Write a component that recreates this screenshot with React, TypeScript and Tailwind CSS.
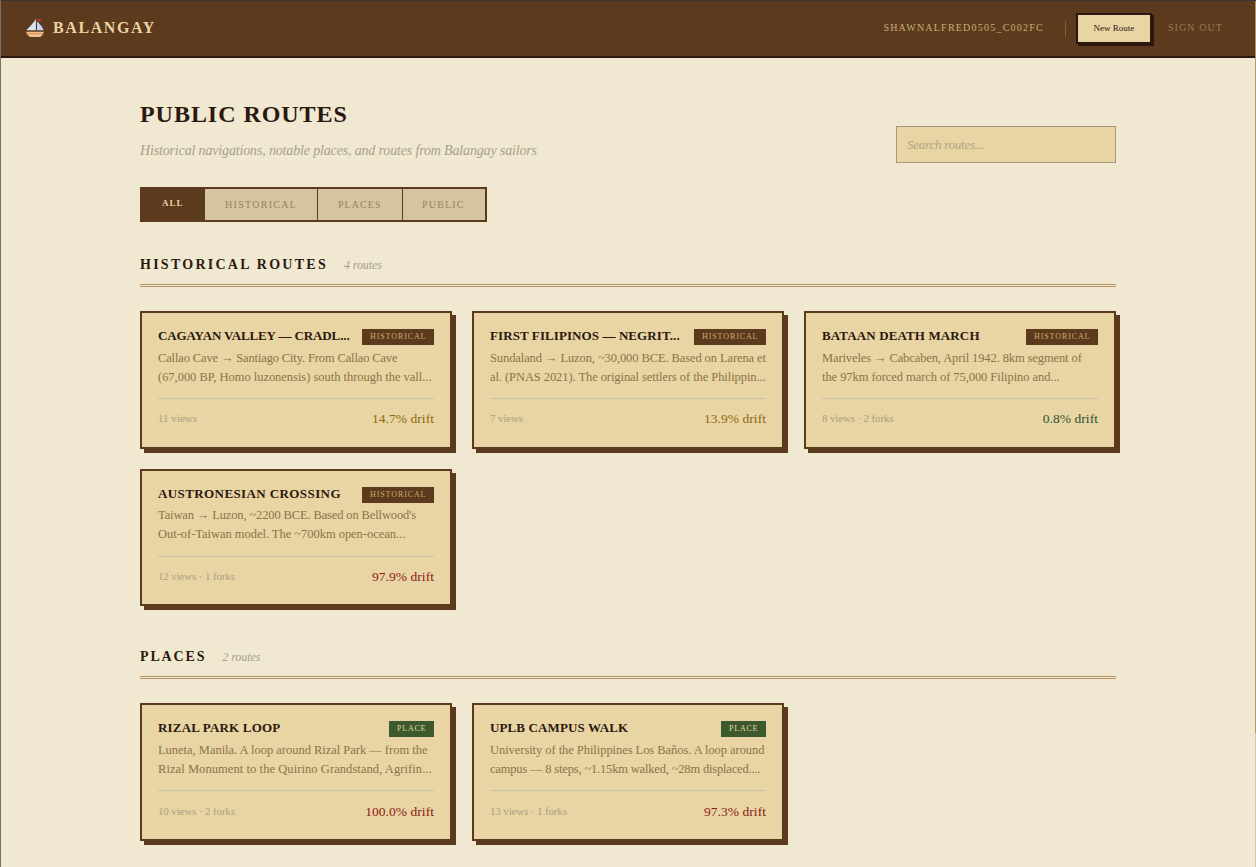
import React, { useState } from 'react';
import clsx from 'clsx';

type Kind = 'historical' | 'place';

interface Line {
  text: string;
  tracking: string;
}

interface RouteItem {
  title: Line;
  kind: Kind;
  description: Line[];
  stats: Line;
  drift: number;
}

const historicalRoutes: RouteItem[] = [
  {
    title: { text: 'CAGAYAN VALLEY — CRADL...', tracking: 'tracking-[-0.12px]' },
    kind: 'historical',
    description: [
      { text: 'Callao Cave → Santiago City. From Callao Cave', tracking: 'tracking-[-0.14px]' },
      { text: '(67,000 BP, Homo luzonensis) south through the vall...', tracking: 'tracking-[-0.028px]' },
    ],
    stats: { text: '11 views', tracking: 'tracking-normal' },
    drift: 14.7,
  },
  {
    title: { text: 'FIRST FILIPINOS — NEGRIT...', tracking: 'tracking-[0.09px]' },
    kind: 'historical',
    description: [
      { text: 'Sundaland → Luzon, ~30,000 BCE. Based on Larena et', tracking: 'tracking-[-0.095px]' },
      { text: 'al. (PNAS 2021). The original settlers of the Philippin...', tracking: 'tracking-[-0.075px]' },
    ],
    stats: { text: '7 views', tracking: 'tracking-[-0.15px]' },
    drift: 13.9,
  },
  {
    title: { text: 'BATAAN DEATH MARCH', tracking: 'tracking-[0.131px]' },
    kind: 'historical',
    description: [
      { text: 'Mariveles → Cabcaben, April 1942. 8km segment of', tracking: 'tracking-[-0.108px]' },
      { text: 'the 97km forced march of 75,000 Filipino and...', tracking: 'tracking-[-0.065px]' },
    ],
    stats: { text: '8 views · 2 forks', tracking: 'tracking-[-0.15px]' },
    drift: 0.8,
  },
  {
    title: { text: 'AUSTRONESIAN CROSSING', tracking: 'tracking-[0.402px]' },
    kind: 'historical',
    description: [
      { text: "Taiwan → Luzon, ~2200 BCE. Based on Bellwood's", tracking: 'tracking-[-0.13px]' },
      { text: 'Out-of-Taiwan model. The ~700km open-ocean...', tracking: 'tracking-[-0.031px]' },
    ],
    stats: { text: '12 views · 1 forks', tracking: 'tracking-[-0.145px]' },
    drift: 97.9,
  },
];

const placeRoutes: RouteItem[] = [
  {
    title: { text: 'RIZAL PARK LOOP', tracking: 'tracking-[0.18px]' },
    kind: 'place',
    description: [
      { text: 'Luneta, Manila. A loop around Rizal Park — from the', tracking: 'tracking-[-0.02px]' },
      { text: 'Rizal Monument to the Quirino Grandstand, Agrifin...', tracking: 'tracking-[0.07px]' },
    ],
    stats: { text: '10 views · 2 forks', tracking: 'tracking-[-0.145px]' },
    drift: 100,
  },
  {
    title: { text: 'UPLB CAMPUS WALK', tracking: 'tracking-[0.12px]' },
    kind: 'place',
    description: [
      { text: 'University of the Philippines Los Baños. A loop around', tracking: 'tracking-[-0.055px]' },
      { text: 'campus — 8 steps, ~1.15km walked, ~28m displaced....', tracking: 'tracking-[-0.176px]' },
    ],
    stats: { text: '13 views · 1 forks', tracking: 'tracking-[-0.145px]' },
    drift: 97.3,
  },
];

const tabs = [
  { id: 'all', label: 'ALL', className: 'w-[63px] pl-5' },
  { id: 'historical', label: 'HISTORICAL', className: 'w-[113px] border-r pl-5 tracking-[1.3px]' },
  { id: 'places', label: 'PLACES', className: 'w-[85px] border-r pl-5 tracking-[1.05px]' },
  { id: 'public', label: 'PUBLIC', className: 'w-[82px] pl-[19px] tracking-[1.19px]' },
];

function BoatIcon() {
  return (
    <svg width="18" height="18" viewBox="0 0 18 18" className="shrink-0">
      <path d="M9.9 0v11.2H.3C3.6 8.2 7 4.4 9.900 0z" fill="#d6e6ee" />
      <path d="M11 2.800c2 1 2.800 2.700 4.300 4.200.8 1.300 1.500 2.700 2.500 4.200H11z" fill="#c5d4f6" />
      <path d="M11 0h4v2.200h-4z" fill="#bb3030" />
      <path d="M0 12.800h18c-.7 2.300-2 4-3.800 5.200H4C2 16.800.7 15.100 0 12.800z" fill="#f3bd8a" />
      <path d="M1 14.700h16" stroke="#cf935c" strokeWidth="1" />
    </svg>
  );
}

function Badge({ kind }: { kind: Kind }) {
  return (
    <span
      className={clsx(
        'h-4 shrink-0 pl-2 text-[8px] leading-[15px]',
        kind === 'historical'
          ? 'w-[72px] bg-[#5c3a1e] tracking-[0.9px] text-[#d0ab6c]'
          : 'w-[45px] bg-[#3d5a2e] tracking-[0.79px] text-[#e8d5a3]'
      )}
    >
      {kind === 'historical' ? 'HISTORICAL' : 'PLACE'}
    </span>
  );
}

function RouteCard({ route }: { route: RouteItem }) {
  const getDriftColor = () => {
    if (route.drift < 5) return 'text-[#2f5233]';
    if (route.drift < 50) return 'text-[#8b6914]';
    return 'text-[#8b1a1a]';
  };

  return (
    <article className="h-[137.6px] border-2 border-[#5c3a1e] bg-[#e8d5a3] p-4 shadow-[4px_4px_0_#5c3a1e]">
      <div className="flex h-4 items-start justify-between whitespace-nowrap">
        <h3 className={clsx('text-[13px] leading-[14px] font-bold text-[#2c1810]', route.title.tracking)}>
          {route.title.text}
        </h3>
        <Badge kind={route.kind} />
      </div>
      <div className="mt-[3.6px] text-[12.5px] leading-[19px] whitespace-nowrap text-[#8b7349]">
        {route.description.map((line) => (
          <p key={line.text} className={line.tracking}>{line.text}</p>
        ))}
      </div>
      <div className="mt-[11.7px] flex items-start justify-between border-t border-[#c8c0b0] pt-[9.2px]">
        <span className={clsx('text-[11px] leading-5 text-[#aca084]', route.stats.tracking)}>
          {route.stats.text}
        </span>
        <span className={clsx('text-[13.5px] leading-[22px] tracking-[0.05px]', getDriftColor())}>
          {route.drift.toFixed(1)}% drift
        </span>
      </div>
    </article>
  );
}

function SectionHeading({ title, count, className }: { title: string; count: number; className: string }) {
  return (
    <div className="flex items-baseline gap-4 border-b-3 border-double border-[#b8935f] pb-[9px] leading-5">
      <h2 className={clsx('text-sm leading-5 font-bold text-[#2c1810]', className)}>{title}</h2>
      <span className="text-xs leading-5 tracking-[-0.08px] text-[#a89f8c] italic">{count} routes</span>
    </div>
  );
}

export default function App() {
  const [activeTab, setActiveTab] = useState('all');
  const [query, setQuery] = useState('');

  return (
    <div className="flex h-[867px] overflow-hidden border-t border-l border-t-[#3a3838] border-l-[#77736c] bg-[#f0e8d0] font-['Liberation_Serif',serif]">
      <div className="min-w-0 flex-1">
        {/* Top bar */}
        <header className="flex h-[57px] items-center justify-between border-b-2 border-[#2c1810] bg-[#5c3a1e] pr-8 pl-[25px]">
          <div className="flex items-center gap-[9px] pb-[2px]">
            <BoatIcon />
            <span className="text-base leading-5 font-bold tracking-[1.6px] text-[#e8d5a3]">BALANGAY</span>
          </div>
          <div className="flex items-center">
            <span className="pb-[2px] text-[10px] tracking-[1.22px] text-[#c8ac78]">SHAWNALFRED0505_C002FC</span>
            <div className="ml-[21px] h-4 w-px bg-[#80603c]" />
            <button className="ml-[10px] h-[31px] w-[76px] border-2 border-[#2c1810] bg-[#e8d5a3] text-[9px] text-[#2c1810] shadow-[2px_2px_0_#2c1810]">
              New Route
            </button>
            <button className="ml-4 pb-[2px] text-[10px] tracking-[1.09px] text-[#997955]">SIGN OUT</button>
          </div>
        </header>

        <main className="mx-auto w-[976px] pt-10">
          {/* Page title and search */}
          <div className="flex items-end justify-between">
            <div className="pb-[2px]">
              <h1 className="text-2xl font-bold tracking-[0.96px] text-[#2c1810]">PUBLIC ROUTES</h1>
              <p className="mt-[11px] text-sm leading-5 tracking-[-0.155px] text-[#a89f8c] italic">
                Historical navigations, notable places, and routes from Balangay sailors
              </p>
            </div>
            <input
              type="text"
              value={query}
              onChange={(e) => setQuery(e.target.value)}
              placeholder="Search routes..."
              className="h-[37px] w-[220px] border border-[#a8977f] bg-[#e8d5a3] px-[10px] text-[13px] tracking-[-0.24px] italic outline-none placeholder:text-[#b0a384]"
            />
          </div>

          {/* Filter tabs */}
          <div className="mt-6 flex h-[35px] w-[347px] border-2 border-[#5c3a1e]">
            {tabs.map((tab) => (
              <button
                key={tab.id}
                onClick={() => setActiveTab(tab.id)}
                className={clsx(
                  'border-[#5c3a1e] pb-px text-left',
                  tab.className,
                  activeTab === tab.id
                    ? 'bg-[#5c3a1e] text-[9px] font-bold tracking-[1px] text-[#e8d5a3]'
                    : 'bg-[#d4c4a0] text-[10px] text-[#94845f]'
                )}
              >
                {tab.label}
              </button>
            ))}
          </div>

          <section className="mt-[33px]">
            <SectionHeading title="HISTORICAL ROUTES" count={4} className="tracking-[2.26px]" />
            <div className="mt-6 grid grid-cols-3 gap-5">
              {historicalRoutes.map((route) => <RouteCard key={route.title.text} route={route} />)}
            </div>
          </section>

          <section className="mt-[41px]">
            <SectionHeading title="PLACES" count={2} className="tracking-[1.85px]" />
            <div className="mt-6 grid grid-cols-3 gap-5">
              {placeRoutes.map((route) => <RouteCard key={route.title.text} route={route} />)}
            </div>
          </section>
        </main>
      </div>

      {/* Scrollbar */}
      <div className="h-full w-px bg-[#d4c8a6]">
        <div className="h-[732px] bg-[#b09860]" />
      </div>
    </div>
  );
}
